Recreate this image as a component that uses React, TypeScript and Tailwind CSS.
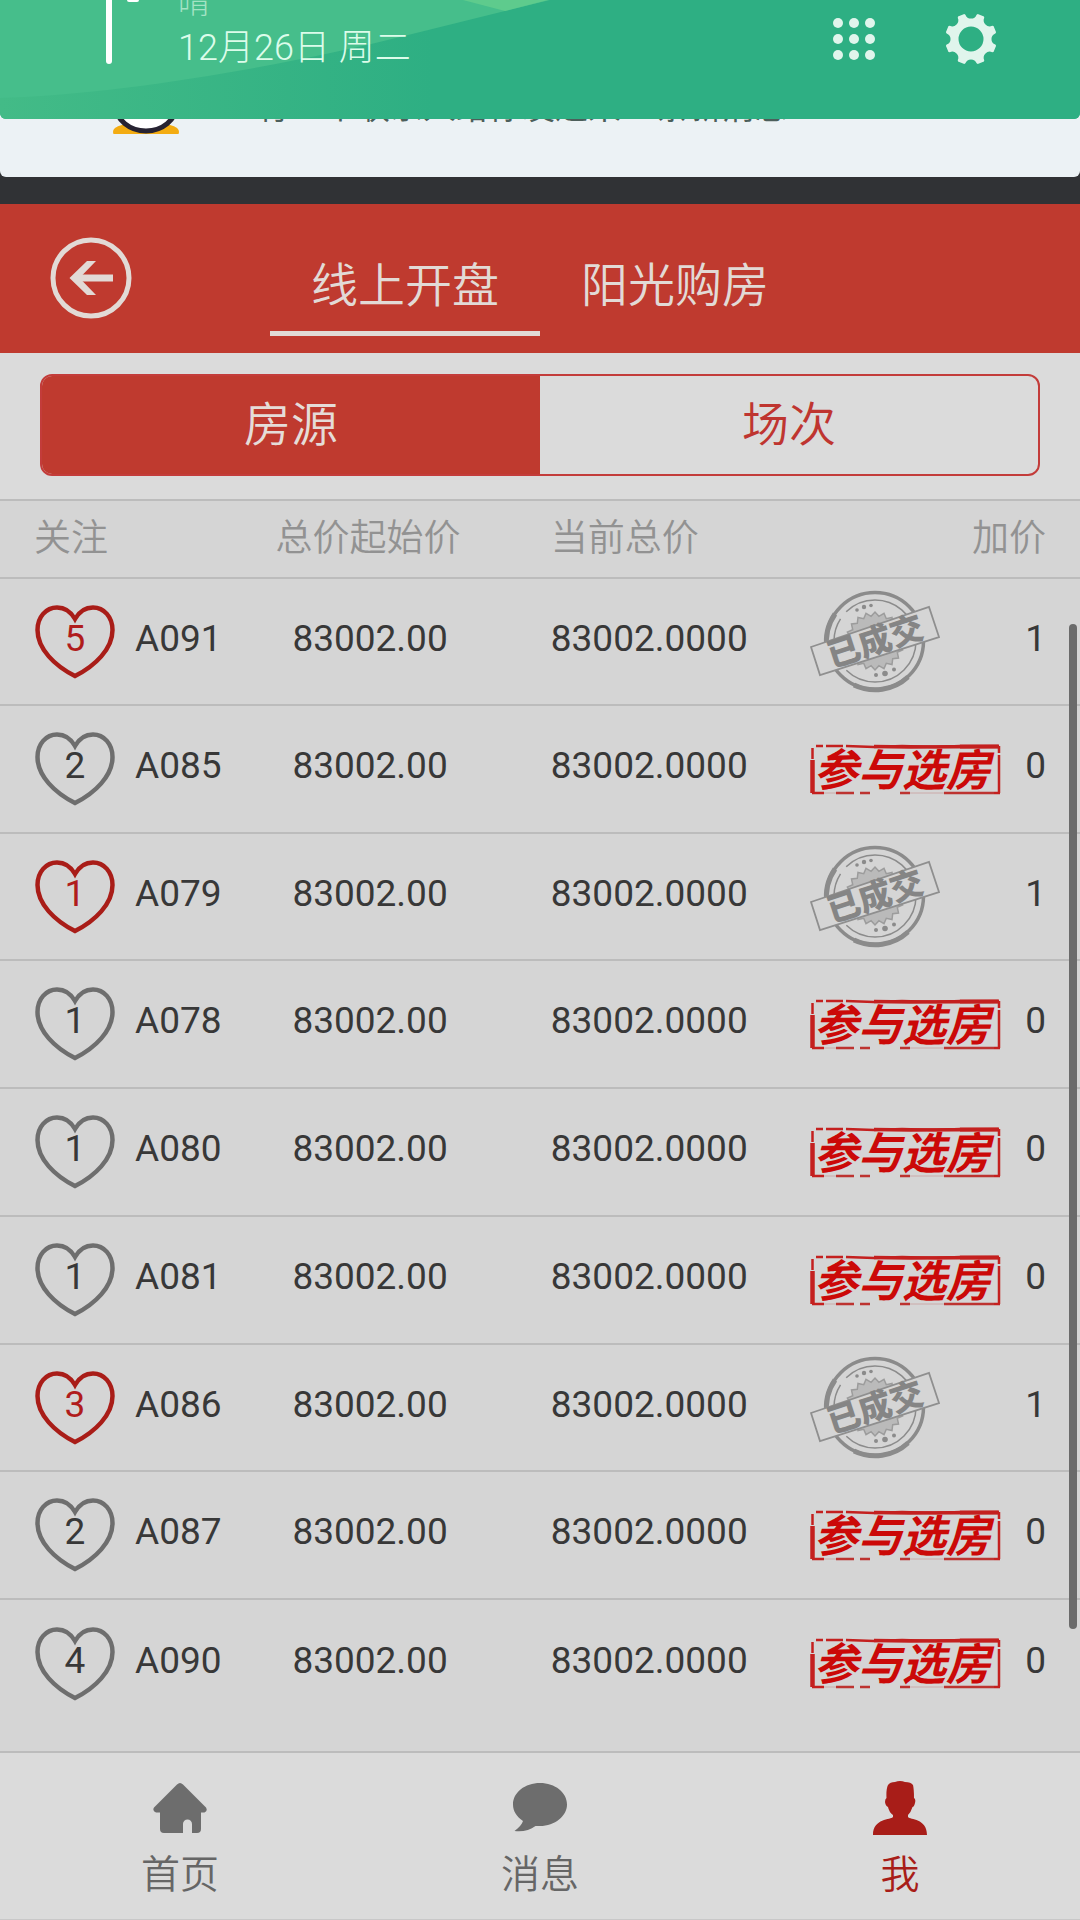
import React from "react";

type House = { follows: number; code: string; start: string; current: string; raises: number; followed: boolean; sold: boolean };

const HOUSES: House[] = [
  { follows: 5, code: "A091", start: "83002.00", current: "83002.0000", raises: 1, followed: true, sold: true },
  { follows: 2, code: "A085", start: "83002.00", current: "83002.0000", raises: 0, followed: false, sold: false },
  { follows: 1, code: "A079", start: "83002.00", current: "83002.0000", raises: 1, followed: true, sold: true },
  { follows: 1, code: "A078", start: "83002.00", current: "83002.0000", raises: 0, followed: false, sold: false },
  { follows: 1, code: "A080", start: "83002.00", current: "83002.0000", raises: 0, followed: false, sold: false },
  { follows: 1, code: "A081", start: "83002.00", current: "83002.0000", raises: 0, followed: false, sold: false },
  { follows: 3, code: "A086", start: "83002.00", current: "83002.0000", raises: 1, followed: true, sold: true },
  { follows: 2, code: "A087", start: "83002.00", current: "83002.0000", raises: 0, followed: false, sold: false },
  { follows: 4, code: "A090", start: "83002.00", current: "83002.0000", raises: 0, followed: false, sold: false },
];

function polar(r: number, deg: number) {
  const a = (deg * Math.PI) / 180;
  return `${(26 + r * Math.cos(a)).toFixed(2)} ${(26 + r * Math.sin(a)).toFixed(2)}`;
}

// Eight teeth separated by rounded notches, with a round hole in the middle.
const GEAR =
  Array.from({ length: 8 }, (_, k) => {
    const a = k * 45;
    return `${k === 0 ? "M" : "L"}${polar(25, a - 13)} A6 6 0 0 0 ${polar(25, a + 13)} L${polar(26, a + 15)} L${polar(26, a + 30)}`;
  }).join(" ") + " Z M26 13.5 a12.5 12.5 0 1 0 0 25 a12.5 12.5 0 1 0 0 -25 Z";

const BURST = Array.from({ length: 40 }, (_, k) => {
  const r = k % 2 ? 25 : 29;
  const a = (k * 9 * Math.PI) / 180;
  return `${(65 + r * Math.cos(a)).toFixed(1)},${(51 + r * Math.sin(a)).toFixed(1)}`;
}).join(" ");

function Heart({ active }: { active: boolean }) {
  return (
    <svg viewBox="0 0 80 74" className={active ? "h-[74px] w-20 text-[#a91d18]" : "h-[74px] w-20 text-[#6e6e6e]"} fill="none" stroke="currentColor" strokeWidth="4.5" aria-hidden="true">
      <path d="M40 14C36 7 29.500 2.500 22 2.500C11 2.500 2.500 12 2.500 25C2.500 44 20 61 40 71C60 61 77.500 44 77.500 25C77.500 12 69 2.500 58 2.500C50.500 2.500 44 7 40 14Z" />
    </svg>
  );
}

function SoldStamp() {
  return (
    <svg viewBox="0 0 130 104" className="h-[104px] w-[130px]" role="img" aria-label="已成交">
      <g fill="none" stroke="#8b8b8b">
        <circle cx="65" cy="51" r="48.500" strokeWidth="3.500" />
        <path d="M17 59A48.500 48.500 0 0 1 25 24" strokeWidth="5" />
        <path d="M44 95A48.500 48.500 0 0 0 98 87" strokeWidth="5" />
        <circle cx="65" cy="51" r="41" strokeWidth="1.500" strokeDasharray="96 6 50 9 90 4" />
      </g>
      <polygon points={BURST} fill="#bababa" stroke="#9c9c9c" strokeWidth="1.500" />
      <g fill="#8b8b8b">
        <circle cx="47" cy="20" r="1.800" />
        <circle cx="54" cy="17" r="2.200" />
        <circle cx="61" cy="15.500" r="1.800" />
        <circle cx="66" cy="85" r="2" />
        <circle cx="75" cy="83.500" r="2.800" />
        <circle cx="84" cy="79.500" r="2" />
      </g>
      <path d="M1 57L119 17L129 47L10 85Z" fill="#d5d5d5" stroke="#8f8f8f" strokeWidth="1.800" />
      <text x="65" y="63" transform="rotate(-18 65 51)" textAnchor="middle" fill="#858585" className="text-[33px] font-black">
        已成交
      </text>
    </svg>
  );
}

function JoinStamp() {
  return (
    <svg viewBox="0 0 191 51" className="h-[51px] w-[191px]" role="img" aria-label="参与选房">
      <g fill="none" stroke="#c4201f" strokeWidth="2.500">
        <path d="M6 2H13M16 2H33M36 2L64 3L92 2L126 3L150 2" />
        <path d="M64 2.500L100 3L188 2.500" strokeWidth="3.500" />
        <path d="M150 2.500H189" strokeWidth="4" />
        <path d="M189 2V9M189 11V49" />
        <path d="M2.500 4V15" />
        <path d="M2.500 16V49" strokeWidth="4.500" />
        <path d="M2 49H14M184 49H190" />
        <path d="M26 49H44M50 49H60M90 49H100M134 49H184" stroke="#bd3330" />
        <path d="M14 49H26M100 49H134" stroke="#cbaaa9" strokeWidth="1" />
      </g>
      <text x="92" y="42" textAnchor="middle" fill="#cb0908" className="text-[44px] font-bold italic">
        参与选房
      </text>
    </svg>
  );
}

function NotificationShade() {
  return (
    <header className="bg-[#303235]">
      <section className="relative z-10 flex h-[119px] items-start justify-between overflow-hidden rounded-b-md bg-[#2eaf83]">
        <svg viewBox="0 0 1080 119" preserveAspectRatio="none" className="absolute inset-0 h-full w-full" aria-hidden="true">
          <defs>
            <linearGradient id="shade" x1="0" x2="1" y1="0" y2="0">
              <stop offset="0" stopColor="#43bb87" />
              <stop offset="0.400" stopColor="#2eaf83" />
            </linearGradient>
          </defs>
          <rect width="1080" height="119" fill="url(#shade)" />
          <path d="M0 98C130 94 300 62 400 37L550 0H0Z" fill="#46be8b" />
          <path d="M463 0L505 11L548 0Z" fill="#5ecb8d" />
        </svg>
        <div className="relative ml-[106px] flex gap-[15px]">
          <div className="h-[64px] w-[6px] rounded-b-full bg-white" />
          <div className="h-[2px] w-3 rounded-b-full bg-white" />
          <div className="-mt-5 ml-6 flex flex-col">
            <span className="text-[32px] leading-[44px] font-light text-[#a3e3c4]">晴</span>
            <span className="text-[36px] leading-[48px] font-light text-[#dcfcea]">12月26日 周二</span>
          </div>
        </div>
        <div className="relative mr-[83px] flex items-center gap-[70px] pt-[13px]">
          <button aria-label="快捷开关">
            <svg viewBox="0 0 42 42" className="h-[42px] w-[42px]" fill="#e0f5ec">
              {[5, 21, 37].map((y) => [5, 21, 37].map((x) => <circle key={`${x}-${y}`} cx={x} cy={y} r="5" />))}
            </svg>
          </button>
          <button aria-label="设置">
            <svg viewBox="0 0 52 52" className="h-[52px] w-[52px]" fill="#e0f5ec" fillRule="evenodd">
              <path d={GEAR} />
            </svg>
          </button>
        </div>
      </section>
      <section className="-mt-[42px] flex h-[100px] items-start rounded-b-md bg-[#ecf2f5]">
        <svg viewBox="0 0 68 58" className="ml-28 h-[58px] w-[68px]" aria-hidden="true">
          <ellipse cx="18" cy="55" rx="17" ry="8" fill="#f3ac12" />
          <ellipse cx="50" cy="55" rx="17" ry="8" fill="#f3ac12" />
          <rect y="57" width="68" height="3" fill="#ecf2f5" />
          <ellipse cx="34" cy="29" rx="30" ry="25" fill="#fff" stroke="#272332" strokeWidth="5" />
        </svg>
        <p className="ml-[76px] pt-[7px] text-[33px] leading-[48px] text-[#4c5f5b]">有 3 个联系人给你发过来 2 条新消息</p>
      </section>
      <div className="h-[27px]" />
    </header>
  );
}

function TitleBar() {
  return (
    <div className="flex h-[149px] items-stretch bg-[#bf3a2f] pb-[17px] text-[#e2dad6]">
      <div className="w-1/4 pt-[33px] pl-[50px]">
        <button aria-label="返回" className="block">
          <svg viewBox="0 0 82 82" className="h-[82px] w-[82px]" fill="none" stroke="currentColor">
            <circle cx="41" cy="41" r="38" strokeWidth="5" />
            <path d="M24 41H63" strokeWidth="7" />
            <path d="M46 24H37L19.500 41L37 58H46L29.500 41Z" fill="currentColor" stroke="none" />
          </svg>
        </button>
      </div>
      <button className="w-1/4 border-b-[5px] border-[#e2dad6] pt-9 text-[47px] leading-[64px] font-[350]">线上开盘</button>
      <button className="w-1/4 border-b-[5px] border-transparent pt-9 text-[47px] leading-[64px] font-[350]">阳光购房</button>
    </div>
  );
}

function Segments() {
  return (
    <div className="bg-[#dbdbdb] px-10 pt-[21px] pb-[23px]">
      <div className="flex h-[102px] overflow-hidden rounded-xl border-2 border-[#c33c3a] text-[47px] font-[350]">
        <button className="flex-1 bg-[#bf3a2f] text-[#e5dcd8]">房源</button>
        <button className="flex-1 text-[#bf3530]">场次</button>
      </div>
    </div>
  );
}

function HouseTable() {
  return (
    <main className="relative flex-1 bg-[#d5d5d5]">
      <table className="w-full table-fixed border-collapse text-left text-[37px] leading-[48px] text-[#383838]">
        <colgroup>
          <col className="w-[12.500%]" />
          <col className="w-[13%]" />
          <col className="w-[25.500%]" />
          <col className="w-[24%]" />
          <col className="w-[18%]" />
          <col />
        </colgroup>
        <thead>
          <tr className="h-[78px] border-t-2 border-[#bcbcbc] text-[#929292]">
            <th colSpan={2} className="pl-[34px] font-[350]">关注</th>
            <th className="font-[350]">总价起始价</th>
            <th className="font-[350]">当前总价</th>
            <th colSpan={2} className="pr-[34px] text-right font-[350]">加价</th>
          </tr>
        </thead>
        <tbody>
          {HOUSES.map((h) => (
            <tr key={h.code} className={h.sold ? "h-[127px] border-t-2 border-[#bcbcbc]" : "h-32 border-t-2 border-[#bcbcbc]"}>
              <td className="pl-[35px]">
                <button className="grid place-items-center" aria-label={`关注 ${h.code}`}>
                  <span className="col-start-1 row-start-1"><Heart active={h.followed} /></span>
                  <span className={h.followed ? "col-start-1 row-start-1 pb-[6px] text-[#b01c1c]" : "col-start-1 row-start-1 pb-[6px]"}>{h.follows}</span>
                </button>
              </td>
              <td className="pb-[6px]">{h.code}</td>
              <td className="pb-[6px] pl-[17px]">{h.start}</td>
              <td className="pb-[6px]">{h.current}</td>
              <td>{h.sold ? <SoldStamp /> : <JoinStamp />}</td>
              <td className="pr-[34px] pb-[6px] text-right">{h.raises}</td>
            </tr>
          ))}
        </tbody>
      </table>
      <div className="absolute top-[125px] right-[3px] h-[1005px] w-2 rounded-full bg-[#6b6b6b]" />
    </main>
  );
}

function BottomNav() {
  return (
    <nav className="grid h-[169px] grid-cols-3 border-t-2 border-b border-t-[#bcbcbc] border-b-[#c8c8c8] bg-[#dbdbdb] pt-7 text-[39px] leading-[56px] font-[350] text-[#666]">
      <a href="#home" className="flex flex-col items-center gap-3">
        <svg viewBox="0 0 54 54" className="h-[54px] w-[54px]" fill="#6d6d6d" aria-hidden="true">
          <path d="M24 3.500Q27 .500 30 3.500L53 26.500Q55 30 51.500 31.500H48V48Q48 52 44 52H39V43A4.500 4.500 0 0 0 30 43V52H11Q7 52 7 48V31.500H3Q-1 30 1 26.500Z" />
        </svg>
        首页
      </a>
      <a href="#messages" className="flex flex-col items-center gap-3">
        <svg viewBox="0 0 54 54" className="h-[54px] w-[54px]" fill="#6d6d6d" aria-hidden="true">
          <path d="M27 2C42 2 54 11.500 54 23.500C54 35 42 45 27 45H22.500C17 49.500 9 51 1.500 50C6 46.500 9 43.500 10 40C3.500 35.500 0 30 0 23.500C0 11.500 12 2 27 2Z" />
        </svg>
        消息
      </a>
      <a href="#me" aria-current="page" className="flex flex-col items-center gap-3 text-[#a81d18]">
        <svg viewBox="0 0 54 54" className="h-[54px] w-[54px]" fill="#a81d18" aria-hidden="true">
          <path d="M15 4Q17 1 22 1Q27-1 32 1Q38 1 40 4Q41 8 41 17Q43 18 42 22Q41 26 39.500 26Q38 31 35 34V36C37 39 54 37 54 54H0C0 37 18 39 20 36V34Q16 31 15 26Q12.500 25 12 21Q12 18 13.500 17Q13 8 15 4Z" />
        </svg>
        我
      </a>
    </nav>
  );
}

export default function App() {
  return (
    <div className="flex min-h-screen flex-col bg-[#dbdbdb] font-[Roboto,'Noto_Sans_CJK_SC',sans-serif]">
      <NotificationShade />
      <TitleBar />
      <Segments />
      <HouseTable />
      <BottomNav />
    </div>
  );
}
